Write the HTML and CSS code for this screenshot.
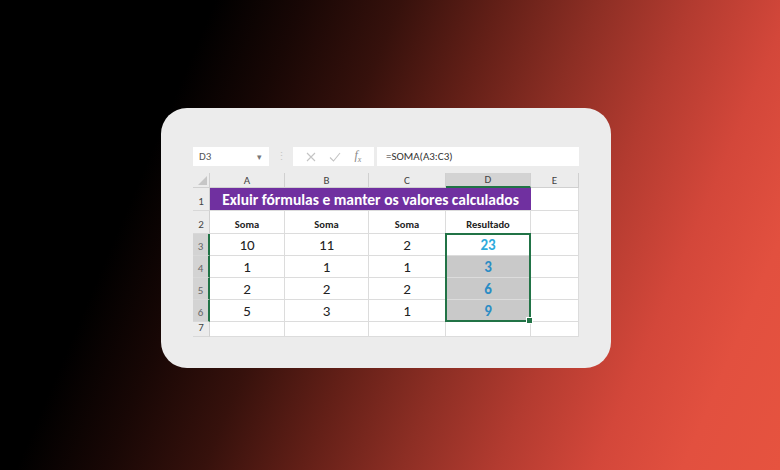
FILE: index.html
```html
<!DOCTYPE html>
<html lang="pt">
<head>
<meta charset="utf-8">
<title>Exluir fórmulas</title>
<link rel="stylesheet" href="styles.css">
</head>
<body>
<div class="card">
  <div class="toolbar">
    <div class="namebox"><span>D3</span><span class="caret">▾</span></div>
    <div class="sep">⋮</div>
    <div class="fxicons">
      <svg class="ic" width="10" height="10" viewBox="0 0 10 10"><path d="M1 1 L9 9 M9 1 L1 9" stroke="#c4c4c4" stroke-width="1.1" fill="none"/></svg>
      <svg class="ic" width="12" height="10" viewBox="0 0 12 10"><path d="M1 5.5 L4.5 9 L11 1" stroke="#c4c4c4" stroke-width="1.1" fill="none"/></svg>
      <span class="fx">f<sub>x</sub></span>
    </div>
    <div class="formula">=SOMA(A3:C3)</div>
  </div>
  <div class="grid">
    <div class="corner"><span class="tri"></span></div>
    <div class="ch">A</div>
    <div class="ch">B</div>
    <div class="ch">C</div>
    <div class="ch sel">D</div>
    <div class="ch">E</div>

    <div class="rh">1</div>
    <div class="banner">Exluir fórmulas e manter os valores calculados</div>
    <div class="c"></div>

    <div class="rh">2</div>
    <div class="c hd">Soma</div>
    <div class="c hd">Soma</div>
    <div class="c hd">Soma</div>
    <div class="c hd">Resultado</div>
    <div class="c"></div>

    <div class="rh sel">3</div>
    <div class="c num">10</div>
    <div class="c num">11</div>
    <div class="c num">2</div>
    <div class="c num res active">23</div>
    <div class="c"></div>

    <div class="rh sel">4</div>
    <div class="c num">1</div>
    <div class="c num">1</div>
    <div class="c num">1</div>
    <div class="c num res">3</div>
    <div class="c"></div>

    <div class="rh sel">5</div>
    <div class="c num">2</div>
    <div class="c num">2</div>
    <div class="c num">2</div>
    <div class="c num res">6</div>
    <div class="c"></div>

    <div class="rh sel">6</div>
    <div class="c num">5</div>
    <div class="c num">3</div>
    <div class="c num">1</div>
    <div class="c num res">9</div>
    <div class="c"></div>

    <div class="rh">7</div>
    <div class="c"></div>
    <div class="c"></div>
    <div class="c"></div>
    <div class="c"></div>
    <div class="c"></div>

    <div class="selection"><span class="handle"></span></div>
  </div>
</div>
</body>
</html>
```

FILE: styles.css
```css
html, body {
  margin: 0;
  padding: 0;
}
body {
  width: 780px;
  height: 470px;
  overflow: hidden;
  background: linear-gradient(113deg, #000 0%, #000 22%, #180705 31%, #36110c 41%, #621f17 51%, #8c2e24 61%, #b33b30 71%, #d3473a 81%, #e2503f 90%, #e6533f 100%);
  font-family: "Carlito", "Lato", "Open Sans", sans-serif;
  padding: 108px 0 0 161px;
  box-sizing: border-box;
}
.card {
  width: 450px;
  height: 260px;
  background: #ececec;
  border-radius: 26px;
  padding: 39px 0 0 32px;
  box-sizing: border-box;
}
.toolbar {
  display: flex;
  align-items: center;
  height: 19px;
  width: 386px;
}
.namebox {
  width: 76px;
  height: 19px;
  background: #fff;
  display: flex;
  align-items: center;
  justify-content: space-between;
  padding: 0 7px 0 6px;
  box-sizing: border-box;
  font-size: 11px;
  color: #555;
}
.caret {
  font-size: 9px;
  color: #777;
}
.sep {
  width: 24px;
  text-align: center;
  color: #c8c8c8;
  font-size: 11px;
}
.fxicons {
  width: 81px;
  height: 19px;
  background: #fff;
  display: flex;
  align-items: center;
  justify-content: space-around;
  padding: 0 6px;
  box-sizing: border-box;
}
.fx {
  font-family: "Liberation Serif", serif;
  font-style: italic;
  font-size: 12px;
  color: #888;
}
.fx sub {
  font-size: 8px;
}
.formula {
  flex: 1;
  margin-left: 3px;
  height: 19px;
  background: #fff;
  font-size: 11px;
  color: #333;
  display: flex;
  align-items: center;
  padding-left: 9px;
}
.grid {
  position: relative;
  margin-top: 7px;
  display: grid;
  grid-template-columns: 17px 75px 84px 77px 85px 48px;
  grid-template-rows: 15px 23px 23px 22px 22px 22px 22px 15px;
  width: 386px;
  background: #fff;
}
.grid > div {
  box-sizing: border-box;
}
.corner {
  background: #ececec;
  border-right: 1px solid #d0d0d0;
  border-bottom: 1px solid #d0d0d0;
  position: relative;
}
.tri {
  position: absolute;
  right: 2px;
  bottom: 2px;
  width: 0;
  height: 0;
  border-left: 9px solid transparent;
  border-bottom: 9px solid #c6c6c6;
}
.ch {
  background: #ececec;
  border-right: 1px solid #d0d0d0;
  border-bottom: 1px solid #d0d0d0;
  font-size: 11px;
  color: #444;
  display: flex;
  align-items: center;
  justify-content: center;
}
.ch.sel {
  background: #d3d3d3;
  border-bottom: 2px solid #217346;
}
.rh {
  background: #ececec;
  border-right: 1px solid #d0d0d0;
  border-bottom: 1px solid #d8d8d8;
  font-size: 11px;
  color: #444;
  display: flex;
  align-items: flex-end;
  justify-content: center;
  padding: 0 0 2px 0;
}
.rh.sel {
  background: #d3d3d3;
  border-right: 2px solid #217346;
  color: #666;
}
.c {
  border-right: 1px solid #dcdcdc;
  border-bottom: 1px solid #dcdcdc;
  display: flex;
  align-items: center;
  justify-content: center;
  color: #222;
}
.banner {
  grid-column: span 4;
  background: #7030a0;
  color: #fff;
  font-weight: bold;
  font-size: 15.5px;
  display: flex;
  align-items: center;
  justify-content: center;
  border-bottom: 1px solid #dcdcdc;
}
.hd {
  font-weight: bold;
  font-size: 10.5px;
  align-items: flex-end;
  padding-bottom: 2px;
}
.num {
  font-size: 15px;
}
.res {
  font-weight: bold;
  background: #c9c9c9;
  color: #2b8cc4;
}
.res.active {
  background: #fff;
  color: #2eaadc;
}
.selection {
  position: absolute;
  grid-column: 5 / 6;
  grid-row: 4 / 8;
  top: -1px;
  left: -1px;
  right: 0;
  bottom: 0;
  border: 2px solid #217346;
  pointer-events: none;
}
.handle {
  position: absolute;
  right: -4px;
  bottom: -4px;
  width: 5px;
  height: 5px;
  background: #217346;
  border: 1px solid #fff;
}
```
